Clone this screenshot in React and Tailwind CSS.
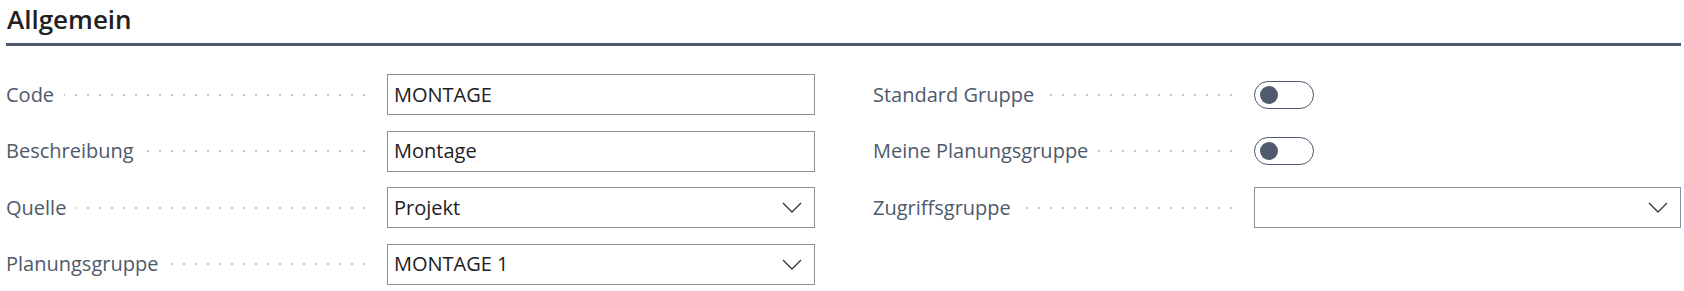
const font = { fontFamily: '"Segoe UI", "Open Sans", "Noto Sans", sans-serif' };

function Chevron() {
  return (
    <svg width="20" height="11" viewBox="0 0 20 11" className="shrink-0">
      <polyline points="1,1 10,10 19,1" fill="none" stroke="#3a3a3a" strokeWidth="1.4" />
    </svg>
  );
}

function Label({ text }) {
  return (
    <div className="flex h-full w-[364px] shrink-0 items-center bg-[radial-gradient(circle,#c9cacf_1.1px,transparent_1.6px)] bg-[length:12px_8px] bg-right bg-repeat-x">
      <span className="bg-white pr-[10px] text-[20px] text-[#4e5a6b]">{text}</span>
    </div>
  );
}

function Row({ label, children }) {
  return (
    <div className="flex h-[41px] items-center gap-[17px]">
      <Label text={label} />
      <div className="h-full flex-1">{children}</div>
    </div>
  );
}

function TextBox({ value }) {
  return (
    <div className="flex h-full items-center border border-[#8b919a] px-[6px] text-[20px] text-[#212121]">
      {value}
    </div>
  );
}

function Select({ value }) {
  return (
    <div className="flex h-full items-center justify-between border border-[#8b919a] pl-[6px] pr-[12px] text-[20px] text-[#212121]">
      <span>{value}</span>
      <Chevron />
    </div>
  );
}

function Toggle() {
  return (
    <div className="flex h-full items-center">
      <div className="flex h-[28px] w-[60px] items-center rounded-full border border-[#505b6e] px-[5px]">
        <div className="h-[18px] w-[18px] rounded-full bg-[#505b6e]" />
      </div>
    </div>
  );
}

export default function App() {
  return (
    <div className="h-[291px] w-[1684px] bg-white pr-[3px] pl-[6px]" style={font}>
      <div className="border-b-[3px] border-[#4f5a6c] pt-[1px] pb-[6px]">
        <h2 className="pl-[1px] text-[26px] leading-[36px] font-semibold text-[#212121]">Allgemein</h2>
      </div>
      <div className="grid grid-cols-[809px_1fr] gap-x-[58px] pt-[28px]">
        <div className="flex flex-col gap-y-[15.5px]">
          <Row label="Code">
            <TextBox value="MONTAGE" />
          </Row>
          <Row label="Beschreibung">
            <TextBox value="Montage" />
          </Row>
          <Row label="Quelle">
            <Select value="Projekt" />
          </Row>
          <Row label="Planungsgruppe">
            <Select value="MONTAGE 1" />
          </Row>
        </div>
        <div className="flex flex-col gap-y-[15.5px]">
          <Row label="Standard Gruppe">
            <Toggle />
          </Row>
          <Row label="Meine Planungsgruppe">
            <Toggle />
          </Row>
          <Row label="Zugriffsgruppe">
            <Select value="" />
          </Row>
        </div>
      </div>
    </div>
  );
}
